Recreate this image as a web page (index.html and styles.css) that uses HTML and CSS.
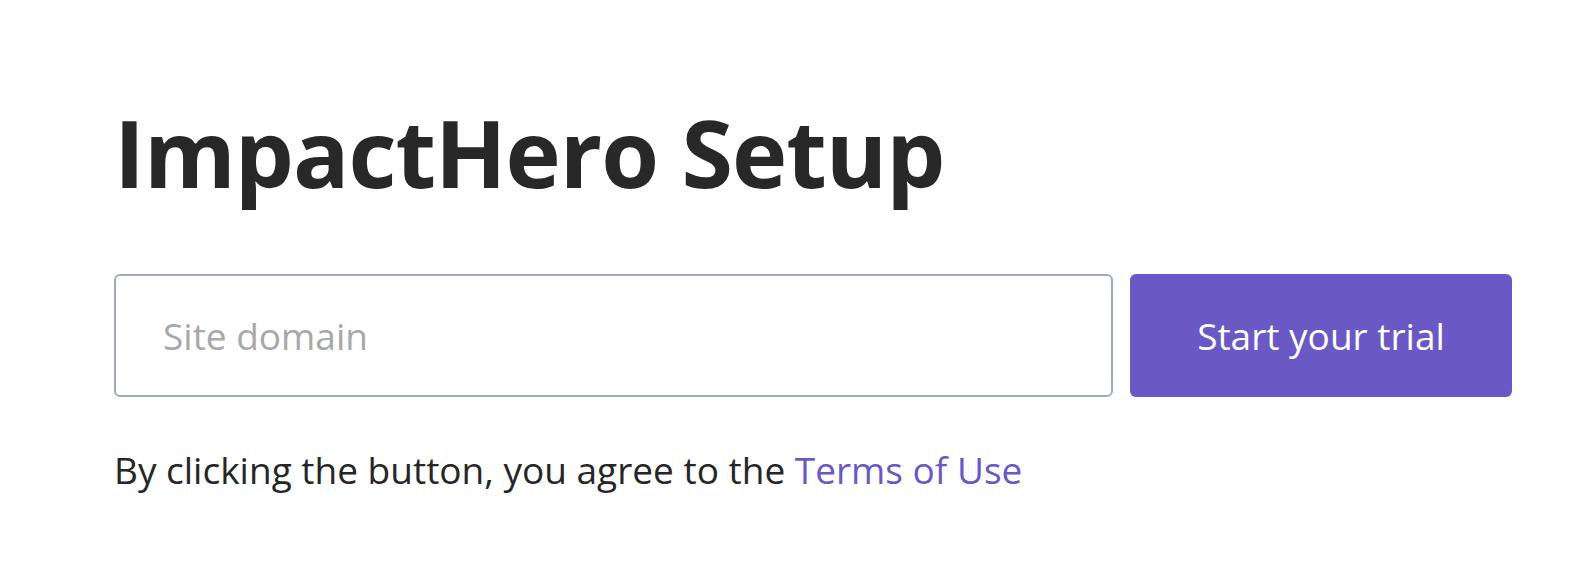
FILE: index.html
```html
<!DOCTYPE html>
<html lang="en">
<head>
<meta charset="UTF-8">
<meta name="viewport" content="width=device-width, initial-scale=1.0">
<title>ImpactHero Setup</title>
<link rel="stylesheet" href="styles.css">
</head>
<body>

<div class="setup">
<h1 class="setup-title">ImpactHero Setup</h1>

<form class="setup-form" onsubmit="return false;">
<input class="domain-input" type="text" placeholder="Site domain">
<button class="trial-button" type="submit">Start your trial</button>
</form>

<p class="terms">By clicking the button, you agree to the <a href="#" class="terms-link">Terms of Use</a></p>
</div>

</body>
</html>
```

FILE: styles.css
```css
body {
margin: 0;
background: #fff;
font-family: "Open Sans", "Noto Sans", sans-serif;
color: #262626;
}

/* Page container */
.setup {
padding: 92px 72px 0 114px;
}

.setup-title {
margin: 0;
font-size: 93.5px;
font-weight: 700;
line-height: 120px;
letter-spacing: -1px;
color: #282828;
}

/* Domain + button row */
.setup-form {
display: flex;
gap: 17px;
margin-top: 62px;
height: 123px;
}

.domain-input {
flex: 1;
box-sizing: border-box;
height: 100%;
padding: 0 47px;
border: 2px solid #9eaac0;
border-radius: 6px;
font-family: inherit;
font-size: 37px;
color: #262626;
outline: none;
}

.domain-input::placeholder {
color: #a8a8a8;
}

.trial-button {
width: 382px;
height: 100%;
border: none;
border-radius: 6px;
background: #6a59c4;
color: #fff;
font-family: inherit;
font-size: 37px;
cursor: pointer;
}

.terms {
margin: 48px 0 0;
font-size: 37px;
line-height: 50px;
color: #262626;
}

.terms-link {
color: #6a59c4;
text-decoration: none;
}
```
